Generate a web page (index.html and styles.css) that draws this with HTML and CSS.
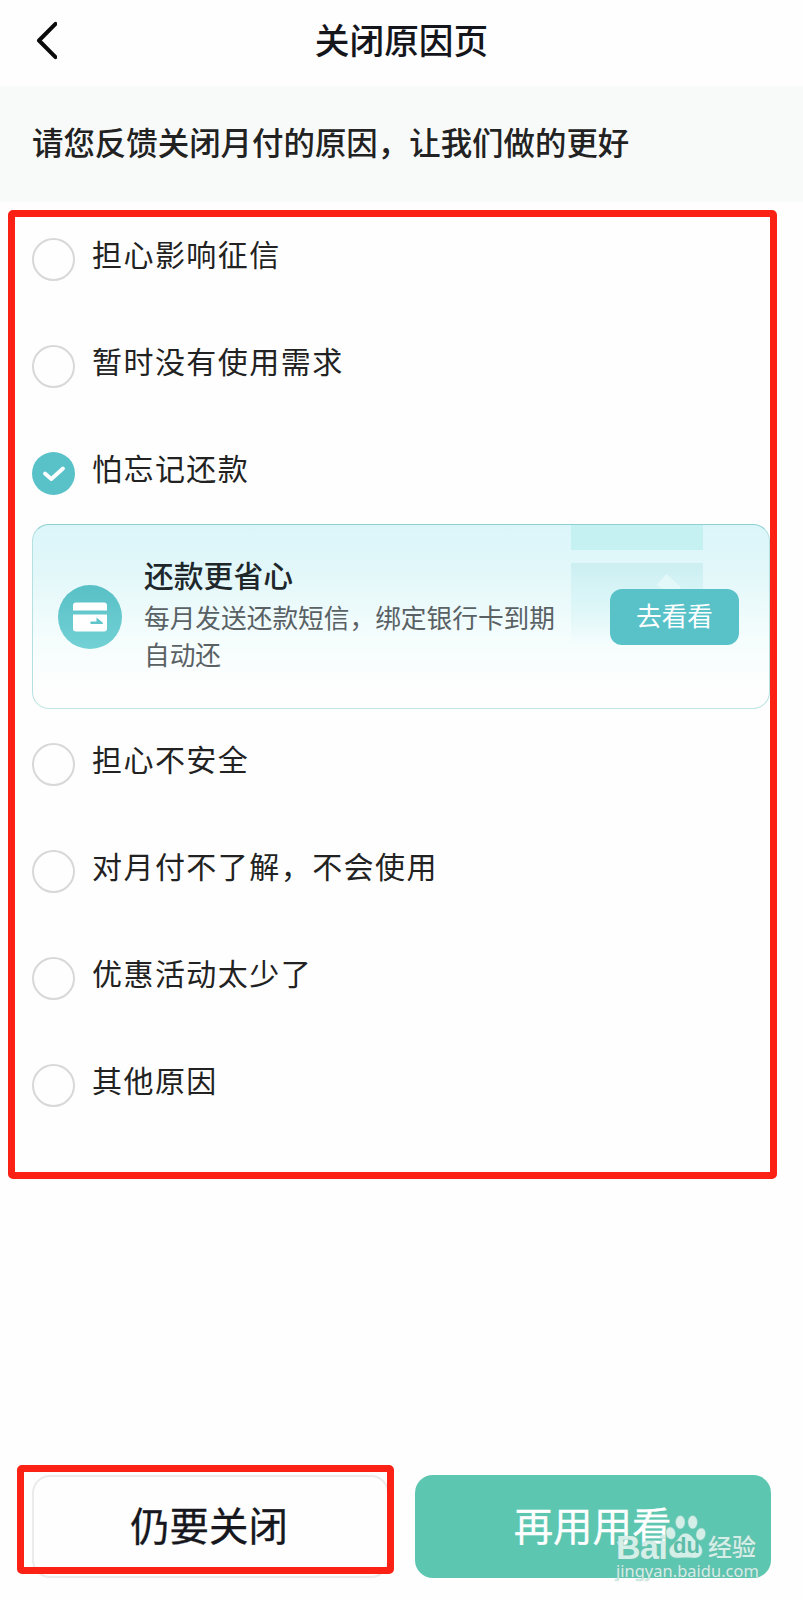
FILE: index.html
```html
<!DOCTYPE html>
<html lang="zh-CN">
<head>
<meta charset="utf-8">
<title>关闭原因页</title>
<link rel="stylesheet" href="styles.css">
</head>
<body>
<div class="page">
  <header class="header">
    <svg class="back" width="24" height="40" viewBox="0 0 24 40"><path d="M22.500 2.800 6 19.500 22.500 36.200" fill="none" stroke="#0a0a0a" stroke-width="4" stroke-linecap="round" stroke-linejoin="round"/></svg>
    <h1 class="title">关闭原因页</h1>
  </header>
  <div class="banner">请您反馈关闭月付的原因，让我们做的更好</div>
  <main class="reasons">
    <div class="option"><span class="radio"></span><span class="label">担心影响征信</span></div>
    <div class="option"><span class="radio"></span><span class="label">暂时没有使用需求</span></div>
    <div class="option"><svg class="checked" width="43" height="43" viewBox="0 0 43 43"><circle cx="21.500" cy="21.500" r="21.500" fill="#59c2c9"/><path d="M13 21.500 19.300 27 31 16.500" fill="none" stroke="#fff" stroke-width="3.800" stroke-linecap="round" stroke-linejoin="round"/></svg><span class="label">怕忘记还款</span></div>
    <section class="card">
      <div class="decor"><span class="strip"></span><span class="panel"></span></div>
      <svg class="card-icon" width="64" height="64" viewBox="0 0 64 64">
        <defs><linearGradient id="disc" x1="0" y1="0" x2="0" y2="1"><stop offset="0" stop-color="#58c0c6"/><stop offset="1" stop-color="#72d1d5"/></linearGradient></defs>
        <circle cx="32" cy="32" r="32" fill="url(#disc)"/>
        <path d="M18 17.500h28a3 3 0 0 1 3 3V25.500H15V20.500a3 3 0 0 1 3-3z" fill="#fff"/>
        <path d="M15 29.500h34V43.500a3 3 0 0 1-3 3H18a3 3 0 0 1-3-3z" fill="#fff"/>
        <path d="M33.500 37.700H42" stroke="#60c5cb" stroke-width="2.600" stroke-linecap="round"/><path d="M38.500 32.500 44.500 37.500a.8.8 0 0 1-.5 1.500h-5.500z" fill="#60c5cb"/>
      </svg>
      <div class="card-text">
        <h2 class="card-title">还款更省心</h2>
        <p class="card-desc">每月发送还款短信，绑定银行卡到期自动还</p>
      </div>
      <button class="look">去看看</button>
    </section>
    <div class="option"><span class="radio"></span><span class="label">担心不安全</span></div>
    <div class="option"><span class="radio"></span><span class="label">对月付不了解，不会使用</span></div>
    <div class="option"><span class="radio"></span><span class="label">优惠活动太少了</span></div>
    <div class="option"><span class="radio"></span><span class="label">其他原因</span></div>
    <div class="mark mark-list"></div>
  </main>
  <footer class="footer">
    <button class="btn close">仍要关闭</button>
    <button class="btn keep">再用用看</button>
    <div class="mark mark-close"></div>
    <div class="watermark">
      <div class="brand">
        <span class="bai">Bai</span>
        <span class="paw"><svg width="42" height="46" viewBox="0 0 44 48"><g fill="#d3efe8" stroke="#7fc9b9" stroke-width=".6"><ellipse cx="6" cy="20" rx="5" ry="6.500" transform="rotate(-12 6 20)"/><ellipse cx="16" cy="8.500" rx="5" ry="7"/><ellipse cx="29" cy="8.500" rx="5" ry="7"/><ellipse cx="37.500" cy="21" rx="5" ry="6.500" transform="rotate(12 37.500 21)"/><path d="M21.500 20c5 0 7 4 10 7.500s8.500 6 7.500 12.500c-1 5-5.500 6.500-9.500 6-5-.4-10-.4-15 0-4.500.3-9.500-1-10-6.500-.5-6 5-8 8-12s4.500-7.500 9-7.500z"/></g></svg><span class="du">du</span></span>
        <span class="jy">经验</span>
      </div>
      <div class="url">jingyan.baidu.com</div>
    </div>
  </footer>
</div>
</body>
</html>
```
FILE: styles.css
```css
* { box-sizing: border-box; }
body {
  margin: 0;
  background: #fefefe;
  color: #222;
  font-family: "Noto Sans CJK SC", sans-serif;
}
h1, h2, p { margin: 0; }
button { font-family: inherit; border: 0; padding: 0; }
.page { display: flex; flex-direction: column; height: 1600px; overflow: hidden; }
.header {
  display: grid;
  grid-template-columns: 24px 1fr 24px;
  align-items: center;
  height: 86px;
  padding: 0 33px 5px;
}
.title { text-align: center; font-size: 34.7px; line-height: 50px; padding-bottom: 3px; font-weight: 500; color: #15151c; }
.banner {
  height: 116px;
  padding: 0 32px 6px;
  display: flex;
  align-items: center;
  background: #f8faf9;
  font-size: 31.45px;
  font-weight: 500;
}
.reasons {
  position: relative;
  display: flex;
  flex-direction: column;
  padding: 36px 32px 0;
}
.option { display: flex; gap: 17px; height: 107px; align-items: flex-start; }
.radio { width: 43px; height: 43px; border: 2.5px solid #d8d8d8; border-radius: 50%; }
.label { font-size: 30px; letter-spacing: 1.45px; line-height: 31px; }
.card {
  position: relative;
  display: flex;
  width: 738px;
  height: 185px;
  margin: -35px 0 34px;
  padding: 0 30px 0 25px;
  align-items: center;
  border: 1.5px solid #a5dbdb;
  border-color: #8ed1d2 #b4e0df #c1e5e2 #b4e0df;
  border-radius: 17px;
  background: linear-gradient(#dbf6fa 0%, #e2f7f9 25%, #f5fdfd 62%, #fefefe 90%);
}
.decor { position: absolute; left: 538px; top: 0; width: 132px; display: flex; flex-direction: column; gap: 13px; }
.strip { height: 25px; background: #c6f1f2; }
.panel { height: 82px; background: linear-gradient(#cceff2, #d9f5f7 40%, rgba(247, 253, 254, 0)); }
.panel::after { content: ""; display: block; width: 14px; height: 20px; margin: 13px 0 0 91px; background: #e3f8f9; transform: rotate(-48deg); }
.card-icon, .card-text, .look { position: relative; }
.card-icon { flex: none; }
.card-text { width: 420px; margin: -7px 0 0 22px; }
.card-title { font-size: 29.8px; line-height: 40px; padding-bottom: 5px; font-weight: 500; color: #20272b; }
.card-desc { font-size: 25.7px; line-height: 36.5px; color: #596164; }
.look {
  width: 129px;
  height: 56px;
  margin-left: auto;
  padding-bottom: 4px;
  border-radius: 12px;
  background: #59c2c9;
  color: #fff;
  font-size: 25.7px;
}
.mark { position: absolute; border: 7px solid #fb2115; border-radius: 5px; }
.mark-list { left: 8px; top: 8px; width: 769px; height: 969px; }
.footer { position: relative; display: flex; gap: 26px; margin-top: auto; padding: 0 32px 22px; }
.btn { height: 103px; border-radius: 18px; font-size: 39.4px; padding-bottom: 7px; }
.close { width: 357px; padding-right: 3px; border: 2px solid #ebebeb; background: #fefefe; color: #17171e; -webkit-text-stroke: .3px #17171e; }
.keep { width: 356px; padding-right: 1px; background: #5dc6b0; color: #fff; -webkit-text-stroke: .3px #fff; }
.mark-close { left: 17px; top: -10px; width: 377px; height: 109px; }
.watermark {
  position: absolute;
  left: 616px;
  top: 39px;
  width: 146px;
  color: #d3efe8;
  text-shadow: 0 0 1px #8ba9a2;
}
.brand { display: flex; align-items: flex-end; height: 46px; }
.bai { width: 49px; font: bold 34px/26px "Liberation Sans", sans-serif; letter-spacing: -.5px; }
.paw { display: flex; position: relative; }
.du { position: absolute; left: 8px; top: 21px; font: bold 22px/22px "Liberation Sans", sans-serif; color: #5dbca8; text-shadow: none; }
.jy { margin-left: 1px; font-size: 24px; font-weight: 500; line-height: 28px; white-space: nowrap; }
.url { font: 16.5px/22px "Noto Sans", sans-serif; }
```
